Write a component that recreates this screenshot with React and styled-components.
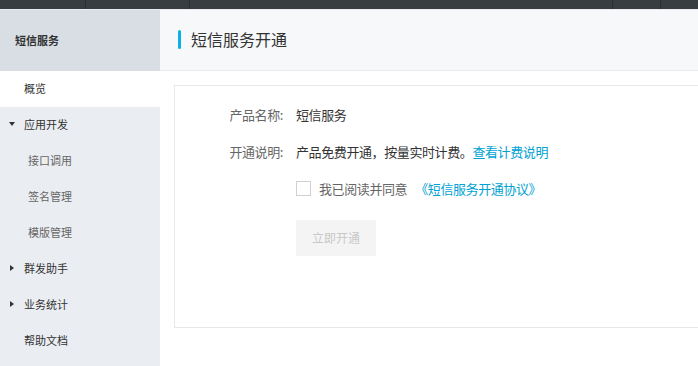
import React, { useState } from 'react';
import styled, { createGlobalStyle } from 'styled-components';

const GlobalStyle = createGlobalStyle`
  html, body {
    margin: 0;
    padding: 0;
    height: 100%;
    overflow: hidden;
  }
  body {
    font-family: "Noto Sans CJK SC", "Liberation Sans", sans-serif;
    background: #fff;
  }
  #root {
    height: 100%;
  }
`;

const Page = styled.div`
  display: flex;
  flex-direction: column;
  height: 100vh;
`;

const TopBar = styled.div`
  display: flex;
  height: 9px;
  background: #373d41;
  border-bottom: 1px solid #e8eaed;
  flex-shrink: 0;
`;

const TopCell = styled.div`
  width: ${props => props.w}px;
  border-right: 1px solid #2a2f32;
  flex-shrink: 0;
`;

const Body = styled.div`
  display: flex;
  flex: 1;
  min-height: 0;
`;

const Sidebar = styled.aside`
  width: 160px;
  flex-shrink: 0;
  background: #eaedf1;
  display: flex;
  flex-direction: column;
`;

const SideHeader = styled.div`
  height: 61px;
  box-sizing: border-box;
  display: flex;
  align-items: center;
  padding: 0 0 2px 15px;
  background: #d9dee4;
  font-size: 11px;
  font-weight: 700;
  color: #333;
`;

const NavItem = styled.div`
  height: 36px;
  box-sizing: border-box;
  display: flex;
  align-items: center;
  padding: 0 0 2px ${props => (props.sub ? 28 : 24)}px;
  position: relative;
  font-size: 11px;
  color: ${props => (props.sub ? '#666' : '#333')};
  background: ${props => (props.active ? '#fff' : 'transparent')};
  cursor: pointer;
`;

const Caret = styled.span`
  position: absolute;
  left: 9px;
  top: 50%;
  width: 0;
  height: 0;
  border-style: solid;
  ${props =>
    props.open
      ? `border-width: 4px 3.5px 0 3.5px;
         border-color: #333 transparent transparent transparent;
         margin-top: -3px;`
      : `border-width: 3.5px 0 3.5px 4px;
         border-color: transparent transparent transparent #333;
         margin-top: -4.5px;
         left: 10px;`}
`;

const Main = styled.main`
  flex: 1;
  min-width: 0;
  display: flex;
  flex-direction: column;
  overflow: hidden;
`;

const PageHead = styled.div`
  height: 61px;
  box-sizing: border-box;
  background: #f7f8fa;
  border-bottom: 1px solid #e9ebee;
  display: flex;
  align-items: center;
  padding: 0 0 1px 18px;
  gap: 10px;
`;

const TitleBar = styled.span`
  width: 3px;
  height: 19px;
  border-radius: 2px;
  background: #0ab0e6;
`;

const Title = styled.h1`
  margin: 0 0 2px;
  font-size: 16px;
  font-weight: 400;
  color: #333;
`;

const Content = styled.div`
  padding: 14px 0 0 14px;
`;

const Card = styled.section`
  width: calc(100% + 20px);
  height: 243px;
  box-sizing: border-box;
  border: 1px solid #e6e8eb;
  padding-top: 17px;
`;

const Row = styled.div`
  display: flex;
  align-items: center;
  height: 22px;
  margin-bottom: ${props => (props.gap === undefined ? 15 : props.gap)}px;
  font-size: 13px;
  letter-spacing: -0.4px;
`;

const Label = styled.span`
  width: 108px;
  flex-shrink: 0;
  text-align: right;
  color: #666;
  margin-right: 13px;
`;

const Value = styled.span`
  color: #333;
`;

const Link = styled.a`
  color: #00a2d4;
  text-decoration: none;
  cursor: pointer;
  margin-left: ${props => props.ml || 0}px;
`;

const Check = styled.label`
  display: flex;
  align-items: center;
  margin-left: 121px;
  color: #666;
  cursor: pointer;
`;

const Box = styled.span`
  width: 13px;
  height: 13px;
  border: 1px solid #d0d0d0;
  background: #fff;
  margin-right: 8px;
  flex-shrink: 0;
  display: flex;
  align-items: center;
  justify-content: center;
  color: #00a2d4;
  font-size: 11px;
`;

const Button = styled.button`
  display: block;
  margin: 21px 0 0 121px;
  width: 80px;
  height: 36px;
  padding: 0 0 2px;
  border: 0;
  background: #f4f4f4;
  color: #c8c8c8;
  font-family: inherit;
  font-size: 12px;
  cursor: not-allowed;
`;

const nav = [
  { label: '概览', active: true },
  { label: '应用开发', caret: 'open' },
  { label: '接口调用', sub: true },
  { label: '签名管理', sub: true },
  { label: '模版管理', sub: true },
  { label: '群发助手', caret: 'closed' },
  { label: '业务统计', caret: 'closed' },
  { label: '帮助文档' },
];

export default function App() {
  const [agreed, setAgreed] = useState(false);

  return (
    <Page>
      <GlobalStyle />
      <TopBar>
        <TopCell w={85} />
        <TopCell w={103} />
        <TopCell w={422} />
        <TopCell w={47} />
      </TopBar>
      <Body>
        <Sidebar>
          <SideHeader>短信服务</SideHeader>
          {nav.map(item => (
            <NavItem key={item.label} sub={item.sub} active={item.active}>
              {item.caret && <Caret open={item.caret === 'open'} />}
              {item.label}
            </NavItem>
          ))}
        </Sidebar>
        <Main>
          <PageHead>
            <TitleBar />
            <Title>短信服务开通</Title>
          </PageHead>
          <Content>
            <Card>
              <Row>
                <Label>产品名称:</Label>
                <Value>短信服务</Value>
              </Row>
              <Row>
                <Label>开通说明:</Label>
                <Value>产品免费开通，按量实时计费。</Value>
                <Link>查看计费说明</Link>
              </Row>
              <Row gap={0}>
                <Check onClick={() => setAgreed(!agreed)}>
                  <Box>{agreed ? '✓' : ''}</Box>
                  我已阅读并同意
                  <Link ml={8}>《短信服务开通协议》</Link>
                </Check>
              </Row>
              <Button disabled={!agreed}>立即开通</Button>
            </Card>
          </Content>
        </Main>
      </Body>
    </Page>
  );
}
